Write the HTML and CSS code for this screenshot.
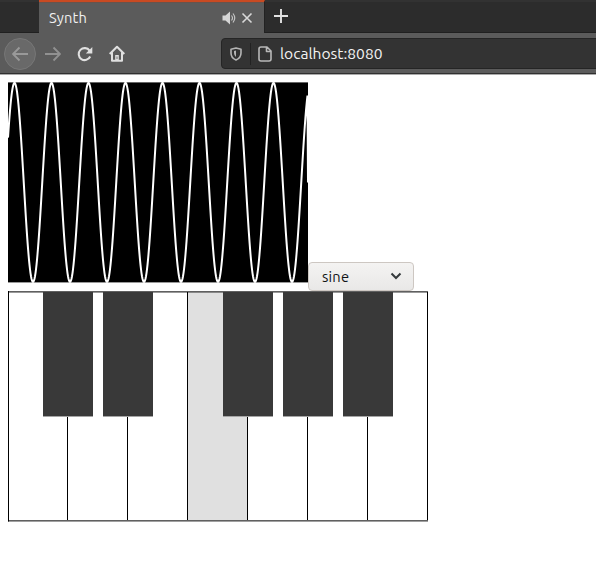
FILE: index.html
```html
<!DOCTYPE html>
<html lang="en">
<head>
<meta charset="utf-8">
<title>Synth</title>
<link rel="stylesheet" href="styles.css">
</head>
<body>
<header class="browser">
  <div class="tabs">
    <div class="tab">
      <span class="tab-title">Synth</span>
      <svg class="speaker" width="15" height="14" viewBox="0 0 15 14"><path d="M.5 4.500h3L8 .5v13L3.500 9.500h-3z" fill="#d5d5d5"/><path d="M9.500 4.500q2 2.500 0 5M11 2.500q3.500 4.500 0 9" fill="none" stroke="#c4c4c4" stroke-width="1.200"/></svg>
      <svg class="close" width="12" height="12" viewBox="0 0 12 12"><path d="M1.500 1.500l9 9M10.500 1.500l-9 9" stroke="#d8d8d8" stroke-width="1.600"/></svg>
    </div>
    <svg class="new-tab" width="14" height="14" viewBox="0 0 14 14"><path d="M7 0v14M0 7h14" stroke="#e2e2e2" stroke-width="1.900"/></svg>
  </div>
  <nav class="toolbar">
    <span class="back"><svg width="16" height="16" viewBox="0 0 16 16"><path d="M16 8H1M7.500 1.500L1 8l6.500 6.500" fill="none" stroke="#999" stroke-width="1.900"/></svg></span>
    <svg class="forward" width="16" height="16" viewBox="0 0 16 16"><path d="M0 8h15M8.500 1.500L15 8l-6.500 6.500" fill="none" stroke="#919191" stroke-width="1.900"/></svg>
    <svg class="reload" width="16" height="16" viewBox="0 0 16 16"><path d="M12.600 4.600A6 6 0 1 0 13.200 10.500" fill="none" stroke="#e0e0e0" stroke-width="2.100"/><path d="M15.300 1v6.500H8.800z" fill="#e0e0e0"/></svg>
    <svg class="home" width="16" height="17" viewBox="0 0 16 17"><path d="M.7 9L8 1.700 15.300 9M3 7.500v8.200h10V7.500" fill="none" stroke="#e0e0e0" stroke-width="2" stroke-linejoin="round"/><path d="M6.200 16v-6h3.600v6z" fill="#e0e0e0"/><path d="M8 11.500V14" stroke="#777"/></svg>
    <div class="address">
      <svg class="shield" width="12" height="14" viewBox="0 0 12 14"><path d="M6 1L11 2.200V6c0 3.500-2 5.700-5 7-3-1.300-5-3.500-5-7V2.200z" fill="none" stroke="#b5b5b5" stroke-width="1.600" stroke-linejoin="round"/><path d="M6 3.500v6.500Q4 8.500 4 6V4z" fill="#b5b5b5"/></svg>
      <span class="divider"></span>
      <svg class="page-icon" width="14" height="16" viewBox="0 0 14 16"><path d="M3 1h6l4 4v8a2 2 0 0 1-2 2H3a2 2 0 0 1-2-2V3a2 2 0 0 1 2-2zM8.500 1v4.500H13" fill="none" stroke="#b8b8b8" stroke-width="1.600" stroke-linejoin="round"/></svg>
      <span class="url">localhost:8080</span>
    </div>
  </nav>
</header>
<main class="page">
  <div class="controls">
    <svg class="scope" width="300" height="201" viewBox="0 -0.4 300 201"><rect width="300" height="200"/><path id="wave" fill="none" stroke="#fff" stroke-width="2"/></svg>
    <div class="select"><span>sine</span><svg width="12" height="8" viewBox="0 0 12 8"><path d="M1.500 1.500L6 6l4.500-4.500" fill="none" stroke="#353a3c" stroke-width="2"/></svg></div>
  </div>
  <div class="keyboard">
    <div class="white"></div><div class="white"></div><div class="white"></div><div class="white pressed"></div><div class="white"></div><div class="white"></div><div class="white"></div>
    <div class="sharps"><i class="black"></i><i class="black"></i><i class="black after-gap"></i><i class="black"></i><i class="black"></i></div>
  </div>
</main>
<script src="script.js"></script>
</body>
</html>
```
FILE: styles.css
```css
* { box-sizing: border-box; }
body { margin: 0; background: #fff; overflow: hidden; font-family: Ubuntu, "Noto Sans", sans-serif; }
svg { display: block; flex: none; }
.browser { height: 75px; background: #5b5b5b; border-bottom: 1px solid #aaa; }
.tabs { height: 33px; display: flex; background: linear-gradient(#323232 0 2px, #2c2c2c 2px 32px, #202020 32px); }
.tab { width: 226px; height: 33px; margin-left: 39px; padding: 0 11px 0 10px; display: flex; align-items: center; background: #5b5b5b; border-top: 2px solid #c94a22; border-right: 1px solid #222; box-shadow: inset 0 1px #68534c; }
.tab-title { font-size: 14.67px; line-height: 20px; letter-spacing: 0.2px; color: #f0f0f0; flex: 1; }
.speaker { margin-right: 4px; }
.new-tab { margin: 9px 0 0 9px; }
.toolbar { height: 41px; display: flex; align-items: center; padding: 1px 0 0 4px; border-bottom: 1px solid #303030; }
.back { width: 32px; height: 32px; flex: none; border-radius: 50%; display: grid; place-items: center; background: #696969; border: 1px solid #777; }
.forward { margin-left: 9px; }
.reload { margin-left: 16px; }
.home { margin-left: 16px; }
.address { margin-left: 96px; width: 380px; height: 31px; flex: none; display: flex; align-items: center; padding-left: 8px; background: #333; border: 1px solid #252525; border-radius: 4px 0 0 4px; }
.divider { width: 1px; height: 22px; margin: 0 7px 0 8px; background: #222; }
.url { margin: -1px 0 0 8px; color: #f2f2f2; font-size: 15.6px; line-height: 20px; white-space: nowrap; }
.page { padding: 7px 8px; }
.controls { height: 209px; display: flex; }
.select { width: 106px; height: 29px; margin-top: 180px; padding: 0 11px 0 13px; display: flex; align-items: center; justify-content: space-between; border: 1px solid #cdc7c2; border-radius: 4px; background: linear-gradient(#f4f3f2, #e9e8e7); color: #101416; font-size: 14.67px; letter-spacing: 0.2px; }
.select span { line-height: 20px; margin-top: 1px; }
.select svg { margin-top: -1px; }
.keyboard { width: 420px; height: 231px; display: flex; position: relative; border-left: 1px solid #000; border-bottom: 1px solid #a0a0a0; }
.white { flex: 0 0 60px; height: 230px; border: solid #606060; border-width: 1px 0; background: linear-gradient(#000, #000) right top / 1px 228px no-repeat, linear-gradient(#999 0 1px, #fff 1px); }
.white:first-child { flex-basis: 59px; }
.pressed { background: linear-gradient(#000, #000) right top / 1px 228px no-repeat, linear-gradient(#888 0 1px, #e0e0e0 1px); }
.sharps { position: absolute; left: 34px; top: 1px; display: flex; gap: 10px; }
.black { width: 50px; height: 125px; background: #393939; border-bottom: 1px solid #a5a5a5; }
.after-gap { margin-left: 60px; }
```
FILE: script.js
```js
// Trace the oscilloscope signal from left to right, ending on the centre line.
const points = [];
for (let x = 0; x <= 299.5; x += 0.5) {
  const y = 100 - 99.5 * Math.cos((x - 6.5) * 2 * Math.PI / 37);
  points.push(`${x},${y.toFixed(2)}`);
}
points.push('300,100');
document.getElementById('wave').setAttribute('d', 'M' + points.join('L'));
```
